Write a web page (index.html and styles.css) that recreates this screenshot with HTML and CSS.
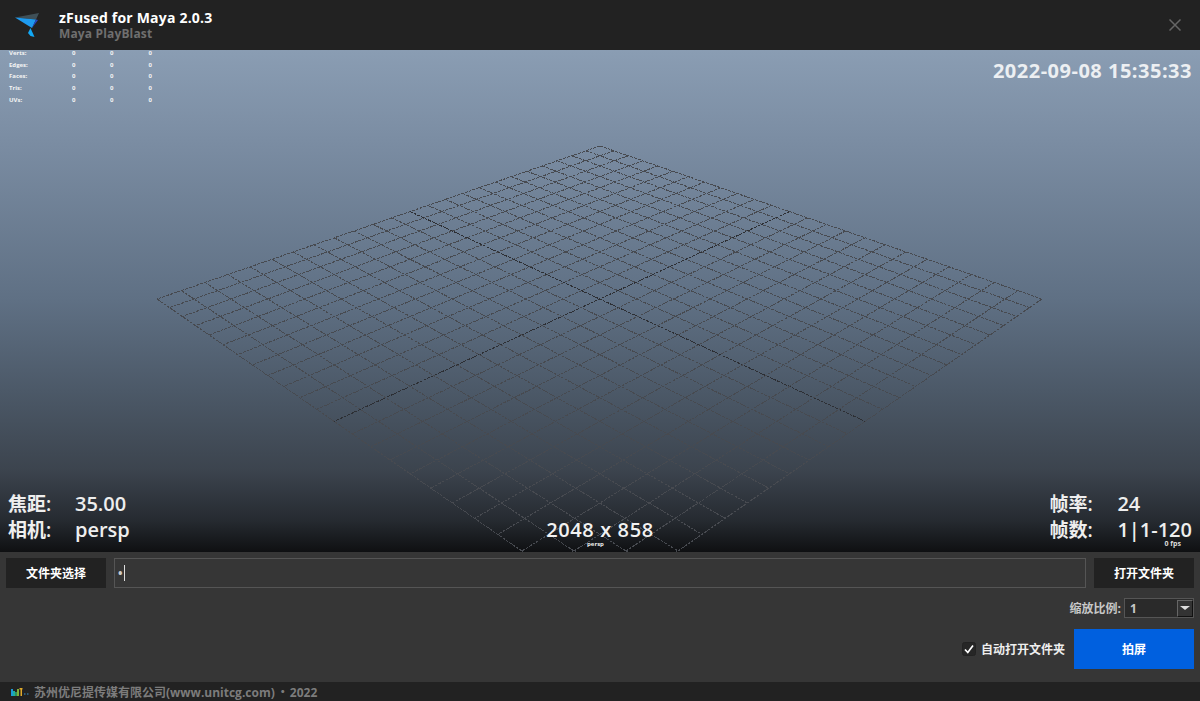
FILE: index.html
```html
<!DOCTYPE html>
<html lang="zh-CN">
  <head>
    <meta charset="UTF-8" />
    <title>zFused for Maya</title>
    <link rel="stylesheet" href="styles.css">
  </head>
  <body>
    <div class="window">
      <header class="titlebar">
        <svg class="logo" width="30" height="30" viewBox="12 10 30 30">
          <polygon points="15,17.5 39,13 36,19.5" fill="#3f5058" />
          <polygon points="15,17.5 36,19.5 32,28" fill="#1e9bf0" />
          <polygon points="36,19.5 38,20 32,28" fill="#2646c8" />
          <polygon points="30.5,28 34.5,37 30.5,36 28,33" fill="#12a8f5" />
        </svg>
        <div class="title-text">
          <div class="title">zFused for Maya 2.0.3</div>
          <div class="subtitle">Maya PlayBlast</div>
        </div>
        <svg class="close" width="12" height="12" viewBox="0 0 12 12">
          <path d="M0.5 0.5 L11.5 11.5 M11.5 0.5 L0.5 11.5" stroke="#666" stroke-width="1.5" fill="none" />
        </svg>
      </header>

      <section class="viewport">
        <svg id="grid" class="grid" width="1200" height="502"></svg>

        <div class="stats">
          <span>Verts:</span><span>0</span><span>0</span><span>0</span>
          <span>Edges:</span><span>0</span><span>0</span><span>0</span>
          <span>Faces:</span><span>0</span><span>0</span><span>0</span>
          <span>Tris:</span><span>0</span><span>0</span><span>0</span>
          <span>UVs:</span><span>0</span><span>0</span><span>0</span>
        </div>

        <div class="timestamp">2022-09-08 15:35:33</div>

        <div class="hud hud-left">
          <span>焦距:</span><span class="hud-value">35.00</span>
          <span>相机:</span><span class="hud-value">persp</span>
        </div>
        <div class="resolution">2048 x 858</div>
        <div class="cam-name">persp</div>
        <div class="hud hud-right">
          <span>帧率:</span><span class="hud-value">24</span>
          <span>帧数:</span><span class="hud-value">1|1-120</span>
        </div>
        <div class="fps">0 fps</div>
      </section>

      <section class="panel">
        <div class="path-row">
          <button class="btn">文件夹选择</button>
          <div class="path-input"><span class="dot">•</span><span class="caret"></span></div>
          <button class="btn">打开文件夹</button>
        </div>
        <div class="scale-row">
          <span class="scale-label">缩放比例:</span>
          <div class="combo">
            <span class="combo-value">1</span>
            <span class="combo-arrow"></span>
          </div>
        </div>
        <div class="action-row">
          <label class="check">
            <svg class="check-box" width="14" height="14" viewBox="0 0 14 14">
              <rect x="0.5" y="0.5" width="13" height="13" rx="2" fill="#262626" stroke="#222" />
              <path d="M3 7.5 L5.8 10.5 L11 3.5" stroke="#fff" stroke-width="1.7" fill="none" />
            </svg>
            自动打开文件夹
          </label>
          <button class="btn-primary">拍屏</button>
        </div>
      </section>

      <footer class="footer">
        <svg class="footer-logo" width="18" height="8" viewBox="0 0 18 8">
          <rect x="0" y="1" width="2" height="7" fill="#1b9ad6" />
          <rect x="2" y="3" width="2" height="5" fill="#1fae9f" />
          <rect x="4" y="4" width="2" height="4" fill="#2f8f5a" />
          <rect x="6" y="1" width="2" height="7" fill="#7fb03a" />
          <rect x="8.500" y="0" width="3" height="1.500" fill="#e0a92a" />
          <rect x="9.500" y="1" width="1.500" height="7" fill="#e0a92a" />
          <rect x="13" y="5" width="1.500" height="2" fill="#2c5a78" />
          <rect x="16" y="5" width="1.500" height="2" fill="#2c5a78" />
        </svg>
        <span>苏州优尼提传媒有限公司(www.unitcg.com)<span class="sep">・</span>2022</span>
      </footer>
    </div>
    <script src="grid.js"></script>
  </body>
</html>
```

FILE: styles.css
```css
* {
  box-sizing: border-box;
}
html,
body {
  margin: 0;
  height: 100%;
  overflow: hidden;
}
body {
  font-family: "Open Sans", "Noto Sans CJK SC", sans-serif;
  background-color: #363636;
  color: #eee;
}
.window {
  display: flex;
  flex-direction: column;
  height: 701px;
}

.titlebar {
  height: 50px;
  flex: none;
  display: flex;
  align-items: center;
  padding: 0 19px 0 12px;
  background-color: #222;
}
.logo {
  flex: none;
  margin-right: 17px;
}
.title-text {
  flex: 1;
  padding-top: 1px;
}
.title {
  font-size: 14px;
  line-height: 17px;
  font-weight: 700;
  letter-spacing: 0.2px;
  color: #fff;
}
.subtitle {
  font-size: 12px;
  line-height: 16px;
  font-weight: 700;
  letter-spacing: 0.15px;
  color: #6f6f6f;
}

.viewport {
  position: relative;
  height: 502px;
  flex: none;
  overflow: hidden;
  background: linear-gradient(
    #8a9db3 0,
    #7b8da3 90px,
    #5f7084 250px,
    #4c5968 340px,
    #3c444e 420px,
    #262b31 470px,
    #0f1012 502px
  );
}
.grid {
  position: absolute;
  top: 0;
  left: 0;
}
.stats {
  position: absolute;
  top: 0;
  left: 9px;
  display: grid;
  grid-template-columns: 63px 38px 38.5px 10px;
  grid-auto-rows: 6px;
  row-gap: 5.7px;
  font-size: 6px;
  line-height: 6px;
  font-weight: 700;
  color: #f4f4f4;
}
.timestamp {
  position: absolute;
  top: 8px;
  right: 8px;
  font-size: 20px;
  line-height: 26px;
  font-weight: 700;
  letter-spacing: 0.5px;
  color: #eceff2;
}
.hud {
  position: absolute;
  top: 443px;
  display: grid;
  grid-auto-rows: 22px;
  row-gap: 4px;
  font-size: 19px;
  line-height: 22px;
  font-weight: 600;
  white-space: nowrap;
  color: #eee;
}
.hud-value {
  font-size: 20px;
}
.hud-left {
  left: 8px;
  grid-template-columns: 67px auto;
}
.hud-right {
  right: 8px;
  grid-template-columns: 68px auto;
}
.resolution {
  position: absolute;
  top: 469px;
  left: 0;
  right: 0;
  text-align: center;
  font-size: 20px;
  line-height: 22px;
  font-weight: 600;
  letter-spacing: 0.6px;
  color: #f2f2f2;
}
.cam-name {
  position: absolute;
  top: 491px;
  left: 0;
  right: 9px;
  text-align: center;
  font-size: 6px;
  line-height: 6px;
  font-weight: 700;
  color: #eee;
}
.fps {
  position: absolute;
  top: 491px;
  right: 19px;
  font-size: 7px;
  line-height: 6px;
  font-weight: 700;
  color: #ddd;
}

.panel {
  flex: 1;
  display: flex;
  flex-direction: column;
  padding: 6px 6px 0;
}
.path-row {
  display: flex;
  gap: 8px;
  height: 30px;
}
.btn {
  width: 100px;
  flex: none;
  border: 0;
  padding: 0;
  background-color: #222;
  color: #fff;
  font-family: inherit;
  font-size: 12px;
  font-weight: 700;
}
.path-input {
  flex: 1;
  display: flex;
  align-items: center;
  padding-left: 3px;
  border: 1px solid #555;
  background-color: #363636;
  font-size: 12px;
  font-weight: 700;
  color: #ccc;
}
.caret {
  width: 1px;
  height: 16px;
  margin-left: 1px;
  background-color: #ddd;
}
.scale-row {
  display: flex;
  align-items: center;
  justify-content: flex-end;
  gap: 3px;
  height: 20px;
  margin-top: 10px;
}
.scale-label {
  font-size: 12px;
  font-weight: 700;
  color: #c8c8c8;
}
.combo {
  width: 70px;
  height: 20px;
  display: flex;
  align-items: center;
  justify-content: space-between;
  padding: 1px 0 1px 5px;
  border: 1px solid #555;
  background-color: #2a2a2a;
}
.combo-value {
  font-size: 12px;
  font-weight: 700;
  color: #c8c8c8;
}
.combo-arrow {
  position: relative;
  width: 16px;
  height: 17px;
  border: 1px solid #666;
  border-right-color: #111;
  border-bottom-color: #111;
  background-color: #333;
}
.combo-arrow::after {
  content: "";
  position: absolute;
  top: 5px;
  left: 2px;
  border-style: solid;
  border-width: 4px 5px 0;
  border-color: #ddd transparent transparent;
}
.action-row {
  display: flex;
  align-items: center;
  justify-content: flex-end;
  gap: 9px;
  margin-top: 11px;
}
.check {
  display: flex;
  align-items: center;
  gap: 5px;
  font-size: 12px;
  font-weight: 700;
  color: #eee;
}
.btn-primary {
  width: 120px;
  height: 40px;
  border: 0;
  padding: 0;
  background-color: #0060df;
  color: #fff;
  font-family: inherit;
  font-size: 12px;
  font-weight: 700;
}

.footer {
  height: 19px;
  flex: none;
  display: flex;
  align-items: center;
  padding-left: 11px;
  background-color: #222;
  font-size: 12px;
  font-weight: 700;
  color: #7c7c7c;
}
.footer-logo {
  margin-right: 5px;
}
.sep {
  margin: 0 1px 0 2px;
}
```

FILE: grid.js
```js
// perspective floor grid, 24 x 24 cells
var svg = document.querySelector("#grid");
var NS = "http://www.w3.org/2000/svg";
var top_y = -50;

// corners of the square in screen px, with projective weights
var back = { x: 600, y: 146 + top_y, w: 1 };
var right = { x: 1042, y: 299 + top_y, w: 0.75 };
var front = { x: 600, y: 605 + top_y, w: 0.5 };
var left = { x: 157, y: 299 + top_y, w: 0.75 };

function project(u, v) {
  var a = (1 - u) * (1 - v) * back.w;
  var b = u * (1 - v) * right.w;
  var c = u * v * front.w;
  var d = (1 - u) * v * left.w;
  var sum = a + b + c + d;
  return {
    x: (a * back.x + b * right.x + c * front.x + d * left.x) / sum,
    y: (a * back.y + b * right.y + c * front.y + d * left.y) / sum,
  };
}

function addLine(p, q, heavy) {
  var line = document.createElementNS(NS, "line");
  line.setAttribute("x1", p.x);
  line.setAttribute("y1", p.y);
  line.setAttribute("x2", q.x);
  line.setAttribute("y2", q.y);
  line.setAttribute("stroke", heavy ? "#2d2f34" : "#474a50");
  line.setAttribute("stroke-dasharray", "3 1");
  line.setAttribute("shape-rendering", "crispEdges");
  svg.appendChild(line);
}

for (var i = 0; i <= 24; i++) {
  var t = i / 24;
  addLine(project(t, 0), project(t, 1), i === 12);
  addLine(project(0, t), project(1, t), i === 12);
}
```
